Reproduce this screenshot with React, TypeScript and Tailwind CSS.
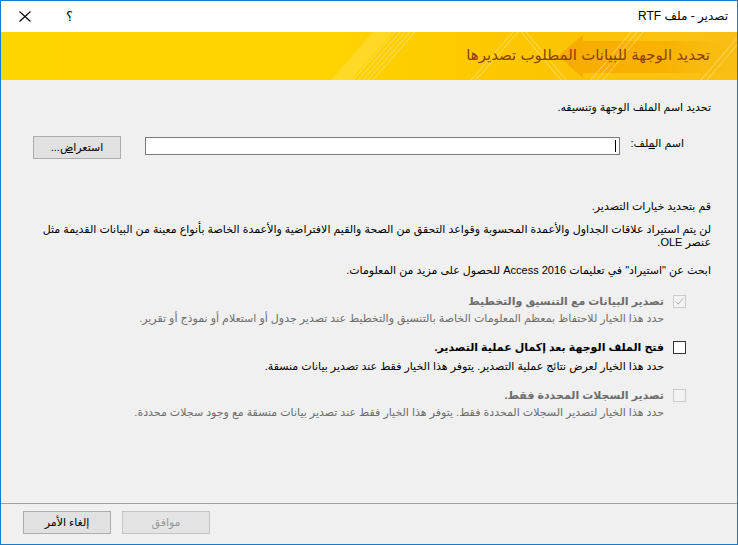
import React from "react";

function Banner() {
  return (
    <div className="relative h-[48px] shrink-0 overflow-hidden">
      <svg className="absolute inset-0" width="736" height="48" viewBox="0 0 736 48">
        <defs>
          <linearGradient id="bg" x1="0" y1="0" x2="1" y2="0">
            <stop offset="0" stopColor="#ffd600" />
            <stop offset="0.45" stopColor="#ffd300" />
            <stop offset="0.7" stopColor="#fcc600" />
            <stop offset="1" stopColor="#f9bf16" />
          </linearGradient>
          <linearGradient id="arrow" x1="0" y1="0" x2="1" y2="0">
            <stop offset="0" stopColor="#f6a600" />
            <stop offset="0.6" stopColor="#f8b000" />
            <stop offset="1" stopColor="#f9bd14" stopOpacity="0.5" />
          </linearGradient>
        </defs>
        <rect width="736" height="48" fill="url(#bg)" />
        <path d="M330 48 L372 0 L392 0 L350 48 Z" fill="#ffe24a" opacity="0.5" />
        <path d="M557 24 L582 3 L582 9 L736 9 L736 41 L582 41 L582 46 Z" fill="url(#arrow)" opacity="0.85" />
        <g stroke="#fff3b0" strokeWidth="1" opacity="0.5">
          <line x1="352" y1="48" x2="394" y2="0" />
          <line x1="357" y1="48" x2="399" y2="0" />
          <line x1="362" y1="48" x2="404" y2="0" />
          <line x1="367" y1="48" x2="409" y2="0" />
          <line x1="372" y1="48" x2="414" y2="0" />
          <line x1="470" y1="48" x2="512" y2="0" />
          <line x1="475" y1="48" x2="517" y2="0" />
          <line x1="520" y1="0" x2="560" y2="48" />
          <line x1="525" y1="0" x2="565" y2="48" />
          <line x1="590" y1="48" x2="630" y2="0" />
          <line x1="596" y1="48" x2="636" y2="0" />
          <line x1="602" y1="48" x2="642" y2="0" />
          <line x1="700" y1="48" x2="736" y2="6" />
          <line x1="706" y1="48" x2="736" y2="13" />
        </g>
      </svg>
      <div className="relative flex h-full items-center pr-[27px] pb-[1px] text-[15px] text-[#8a4300]">
        تحديد الوجهة للبيانات المطلوب تصديرها
      </div>
    </div>
  );
}

function CheckBox({ checked, disabled }: { checked?: boolean; disabled?: boolean }) {
  return (
    <div
      className={
        disabled
          ? "flex h-[13px] w-[13px] shrink-0 items-center justify-center border border-[#cccccc] bg-[#f3f3f3]"
          : "flex h-[13px] w-[13px] shrink-0 items-center justify-center border border-[#333333] bg-white"
      }
    >
      {checked && (
        <svg width="11" height="11" viewBox="0 0 11 11">
          <path d="M1.5 5.5 L4.2 8.2 L9.5 2" fill="none" stroke="#b0b0b0" strokeWidth="1" />
        </svg>
      )}
    </div>
  );
}

export default function App() {
  return (
    <div
      dir="rtl"
      className="flex h-[545px] w-[738px] flex-col overflow-hidden border border-[#1979ca] bg-[#f0f0f0] font-['Liberation_Sans','DejaVu_Sans',sans-serif] text-[11px] text-black"
    >
      {/* title bar */}
      <div className="flex h-[31px] shrink-0 items-center justify-between bg-white pr-[9px] pl-[18px] text-[12px]">
        <span className="pb-[1px]">تصدير - ملف RTF</span>
        <div className="flex items-center gap-[35px]">
          <span className="text-[13px]">؟</span>
          <svg width="12" height="11" viewBox="0 0 12 11">
            <path d="M0.5 0.5 L11.5 10.5 M11.5 0.5 L0.5 10.5" stroke="#000" strokeWidth="1.1" />
          </svg>
        </div>
      </div>

      <Banner />

      {/* body */}
      <div className="flex flex-1 flex-col pr-[26px] pl-[32px]">
        <div className="mt-[20px] leading-[14px]">تحديد اسم الملف الوجهة وتنسيقه.</div>

        <div className="mt-[22px] flex h-[23px] items-center pr-[27px]">
          <div className="w-[55px] shrink-0 pb-[9px] leading-[14px]">
            اسم ال<span className="underline">م</span>لف:
          </div>
          <div className="mr-[9px] flex h-[18px] w-[475px] shrink-0 self-start mt-[1px] items-center border border-[#7a7a7a] bg-white pr-[3px]">
            <div className="h-[12px] w-[1px] bg-black" />
          </div>
          <button className="mr-[24px] h-[23px] w-[88px] shrink-0 border border-[#adadad] bg-[#e1e1e1] text-[11px]">
            استعرا<span className="underline">ض</span>...
          </button>
        </div>

        <div className="mt-[40px] leading-[14px]">قم بتحديد خيارات التصدير.</div>

        <div className="mt-[10px] whitespace-nowrap leading-[13px]">
          لن يتم استيراد علاقات الجداول والأعمدة المحسوبة وقواعد التحقق من الصحة والقيم الافتراضية والأعمدة الخاصة بأنواع معينة من البيانات القديمة مثل
          <br />
          عنصر OLE.
        </div>

        <div className="mt-[14px] leading-[14px]">
          ابحث عن "استيراد" في تعليمات Access 2016 للحصول على مزيد من المعلومات.
        </div>

        {/* options */}
        <div className="mt-[17px] flex h-[14px] items-center gap-[9px] pr-[25px]">
          <CheckBox checked disabled />
          <span className="font-bold leading-[14px] text-[#6d6d6d]">تصدير البيانات مع التنسيق والتخطيط</span>
        </div>
        <div className="mt-[3px] pr-[47px] leading-[14px] text-[#6d6d6d]">
          حدد هذا الخيار للاحتفاظ بمعظم المعلومات الخاصة بالتنسيق والتخطيط عند تصدير جدول أو استعلام أو نموذج أو تقرير.
        </div>

        <div className="mt-[15px] flex h-[14px] items-center gap-[9px] pr-[25px]">
          <CheckBox />
          <span className="font-bold leading-[14px]">فتح الملف الوجهة بعد إكمال عملية التصدير.</span>
        </div>
        <div className="mt-[5px] pr-[47px] leading-[14px]">
          حدد هذا الخيار لعرض نتائج عملية التصدير. يتوفر هذا الخيار فقط عند تصدير بيانات منسقة.
        </div>

        <div className="mt-[15px] flex h-[14px] items-center gap-[9px] pr-[25px]">
          <CheckBox disabled />
          <span className="font-bold leading-[14px] text-[#6d6d6d]">تصدير السجلات المحددة فقط.</span>
        </div>
        <div className="mt-[3px] pr-[47px] leading-[14px] text-[#6d6d6d]">
          حدد هذا الخيار لتصدير السجلات المحددة فقط. يتوفر هذا الخيار فقط عند تصدير بيانات منسقة مع وجود سجلات محددة.
        </div>
      </div>

      {/* footer */}
      <div className="flex h-[41px] shrink-0 items-start justify-end gap-[11px] border-t border-[#a0a0a0] pt-[7px] pl-[22px]">
        <button className="h-[23px] w-[88px] border border-[#c4c4c4] bg-[#e4e4e4] text-[11px] text-[#9a9a9a]">موافق</button>
        <button className="h-[23px] w-[88px] border border-[#adadad] bg-[#e1e1e1] text-[11px]">إلغاء الأمر</button>
      </div>
    </div>
  );
}
